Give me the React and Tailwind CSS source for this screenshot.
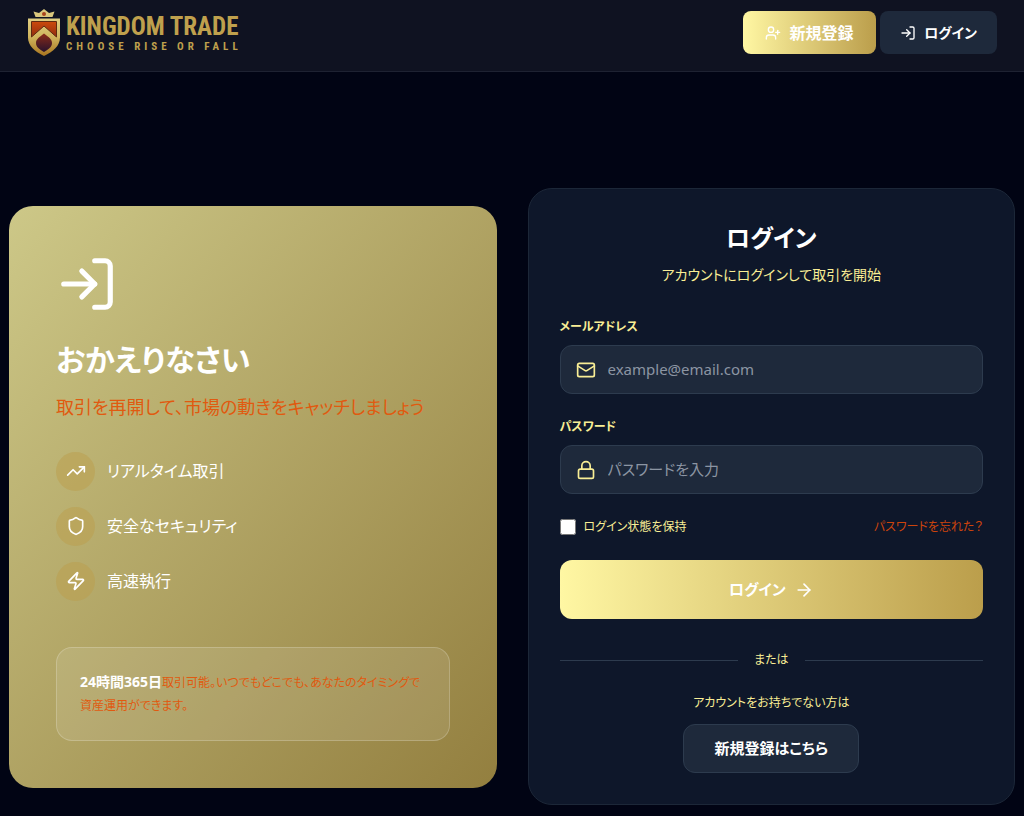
import React, { useState } from "react";
import { ArrowRight, Lock, LogIn, Mail, Shield, TrendingUp, UserPlus, Zap } from "lucide-react";

const features = [
  { icon: TrendingUp, label: "リアルタイム取引" },
  { icon: Shield, label: "安全なセキュリティ" },
  { icon: Zap, label: "高速執行" },
];

function Logo() {
  return (
    <a href="/" className="flex items-center gap-[6px] text-[#bfa04d]">
      <svg viewBox="0 0 64 94" className="h-[47px] w-8">
        <defs>
          <linearGradient id="gold" x1="0" y1="0" x2="0" y2="1">
            <stop offset="0" stopColor="#e0cf83" />
            <stop offset="0.5" stopColor="#cfb35c" />
            <stop offset="1" stopColor="#a8741f" />
          </linearGradient>
          <linearGradient id="ember" x1="0" y1="0" x2="0" y2="1">
            <stop offset="0" stopColor="#cc4a0c" />
            <stop offset="1" stopColor="#8f2c10" />
          </linearGradient>
          <linearGradient id="drop" x1="0" y1="0" x2="0" y2="1">
            <stop offset="0" stopColor="#8a2a18" />
            <stop offset="1" stopColor="#28122c" />
          </linearGradient>
        </defs>
        <path d="M11 5l11 3 10-8 10 8 11-3-4 11H15z" fill="#dac77d" />
        <circle cx="32" cy="10" r="4" fill="#a8441c" />
        <path d="M0 19h64v38c0 17-14 28-32 37C14 85 0 74 0 57z" fill="url(#gold)" />
        <path
          d="M7 25h50v31L32 34 7 56z"
          fill="url(#ember)"
          stroke="#5e2a12"
          strokeWidth="2"
        />
        <path
          d="M32 49c9 7 16 11 16 19 0 8-7 13-16 18-9-5-16-10-16-18 0-8 7-12 16-19z"
          fill="url(#drop)"
        />
      </svg>
      <span className="flex flex-col">
        <span className="font-['Liberation_Sans_Narrow','Roboto_Condensed','Roboto',sans-serif] text-[25px] leading-[28px] font-bold">
          KINGDOM TRADE
        </span>
        <span className="font-['Liberation_Sans_Narrow','Roboto_Condensed','Roboto',sans-serif] text-[11px] leading-[12px] font-bold tracking-[4px]">
          CHOOSE RISE OR FALL
        </span>
      </span>
    </a>
  );
}

function Header() {
  return (
    <header className="flex h-[72px] items-start justify-between border-b border-[#1e2232] bg-[#0f1221] pr-[27px] pl-7">
      <div className="pt-[9px]">
        <Logo />
      </div>
      <div className="flex gap-1 pt-[11px]">
        <button
          type="button"
          className="flex h-[43px] w-[133px] items-center justify-center gap-2 rounded-lg bg-linear-to-r from-[#fff7a3] to-[#bb9e4b] text-[16px] font-bold text-white"
        >
          <UserPlus size={16} />
          新規登録
        </button>
        <button
          type="button"
          className="flex h-[43px] w-[117px] items-center justify-center gap-2 rounded-lg bg-[#1e293b] text-[14px] font-bold text-white"
        >
          <LogIn size={16} />
          ログイン
        </button>
      </div>
    </header>
  );
}

function WelcomeCard() {
  return (
    <section className="rounded-3xl bg-linear-to-br from-[#cdc888] to-[#937f3f] p-[47px] text-white">
      <LogIn size={62} />
      <h1 className="mt-[23px] text-[30px] leading-[43px] font-bold">おかえりなさい</h1>
      <p className="mt-3 text-[18px] leading-7 text-[#e05a10]">
        取引を再開して、市場の動きをキャッチしましょう
      </p>
      <ul className="mt-[31px] flex flex-col gap-4">
        {features.map(({ icon: Icon, label }) => (
          <li key={label} className="flex items-center gap-3">
            <span className="flex h-[39px] w-[39px] items-center justify-center rounded-full bg-[#bb9e4b]/50">
              <Icon size={20} />
            </span>
            <span className="text-[16px] leading-6">{label}</span>
          </li>
        ))}
      </ul>
      <div className="mt-[46px] rounded-2xl border border-white/20 bg-white/10 p-[23px]">
        <p className="text-[12px] leading-[23px] text-[#e05a10]">
          <strong className="text-[14px] leading-none text-white">24時間365日</strong>
          取引可能。いつでもどこでも、あなたのタイミングで資産運用ができます。
        </p>
      </div>
    </section>
  );
}

function Field({ id, label, icon: Icon, ...props }) {
  return (
    <div>
      <label htmlFor={id} className="block text-[12px] leading-5 font-bold text-[#f9ee95]">
        {label}
      </label>
      <div className="mt-2 flex h-[49px] items-center gap-3 rounded-xl border border-[#2d3b4e] bg-[#1e293b] px-[15px]">
        <Icon size={20} className="shrink-0 text-[#f9ee95]" />
        <input
          id={id}
          className="min-w-0 flex-1 bg-transparent text-[15px] text-white outline-none placeholder:text-[#8c95a3]"
          {...props}
        />
      </div>
    </div>
  );
}

function LoginCard() {
  const [email, setEmail] = useState("");
  const [password, setPassword] = useState("");
  const [remember, setRemember] = useState(false);

  return (
    <section className="rounded-3xl border border-[#1c2738] bg-[#0e172a] p-[31px]">
      <div className="text-center">
        <h2 className="text-[24px] leading-[35px] font-bold text-white">ログイン</h2>
        <p className="mt-2 text-[14px] leading-[23px] text-[#f9ee95]">
          アカウントにログインして取引を開始
        </p>
      </div>

      <form className="mt-[31px] flex flex-col gap-[23px]" onSubmit={(e) => e.preventDefault()}>
        <Field
          id="email"
          label="メールアドレス"
          icon={Mail}
          type="email"
          placeholder="example@email.com"
          value={email}
          onChange={(e) => setEmail(e.target.value)}
        />
        <Field
          id="password"
          label="パスワード"
          icon={Lock}
          type="password"
          placeholder="パスワードを入力"
          value={password}
          onChange={(e) => setPassword(e.target.value)}
        />

        <div className="flex items-center justify-between text-[12px] leading-5">
          <label className="flex items-center gap-2 text-[#f9ee95]">
            <input
              type="checkbox"
              className="h-4 w-4"
              checked={remember}
              onChange={(e) => setRemember(e.target.checked)}
            />
            ログイン状態を保持
          </label>
          <a href="/forgot-password" className="text-[#cc440c]">
            パスワードを忘れた？
          </a>
        </div>

        <button
          type="submit"
          className="flex h-[59px] items-center justify-center gap-2 rounded-xl bg-linear-to-r from-[#fff7a3] to-[#bb9e4b] text-[15px] font-bold text-white"
        >
          ログイン
          <ArrowRight size={20} />
        </button>
      </form>

      <div className="mt-[31px] flex items-center gap-4 text-[12px] leading-5 text-[#f9ee95]">
        <span className="h-px flex-1 bg-[#2d3b4e]" />
        または
        <span className="h-px flex-1 bg-[#2d3b4e]" />
      </div>

      <div className="mt-[23px] flex flex-col items-center">
        <p className="text-[12px] leading-5 text-[#f9ee95]">アカウントをお持ちでない方は</p>
        <a
          href="/register"
          className="mt-[11px] flex h-[49px] items-center rounded-xl border border-[#2d3b4e] bg-[#1e293b] px-[30px] text-[15px] font-bold text-white"
        >
          新規登録はこちら
        </a>
      </div>
    </section>
  );
}

export default function App() {
  return (
    <div className="min-h-screen bg-[#010414] font-['Noto_Sans','Noto_Sans_CJK_JP',sans-serif] [font-feature-settings:'palt']">
      <Header />
      <main className="grid grid-cols-2 items-center gap-[31px] px-[9px] pt-[116px] pb-[11px]">
        <WelcomeCard />
        <LoginCard />
      </main>
    </div>
  );
}
